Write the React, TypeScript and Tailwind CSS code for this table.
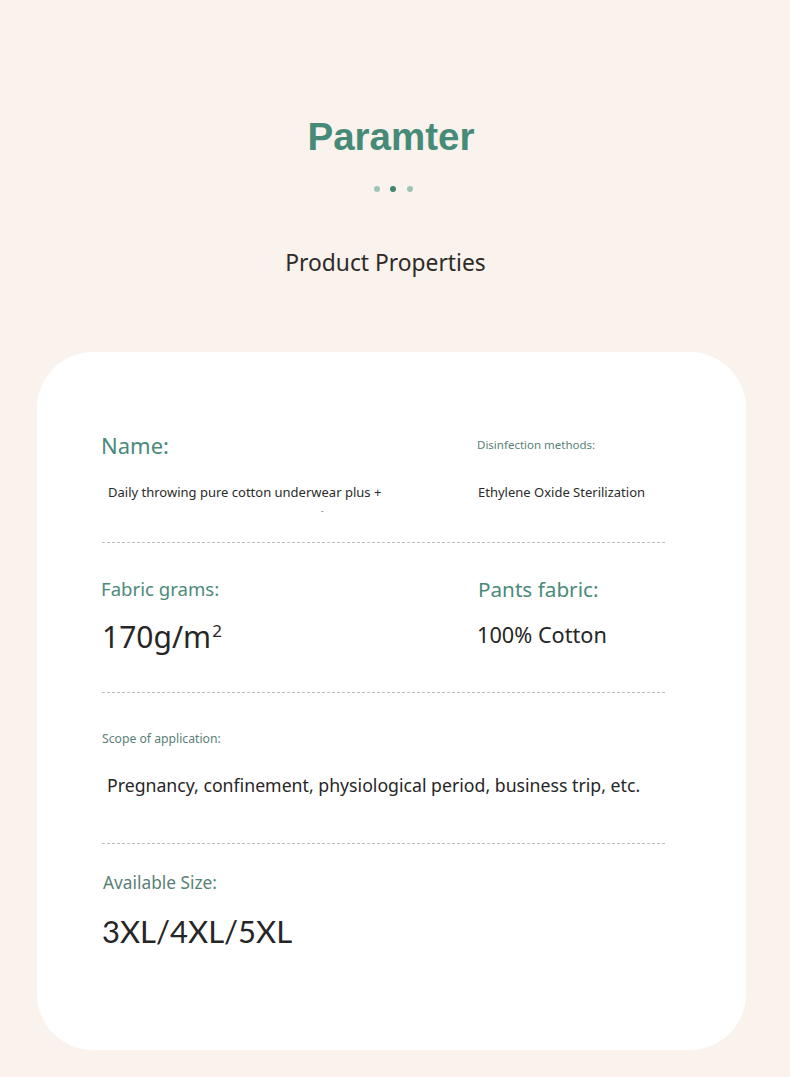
import React from "react";

const noto = { fontFamily: '"Noto Sans", "Open Sans", sans-serif' };

export default function App() {
  return (
    <div className="w-[790px] h-[1077px] bg-[#faf2ec] overflow-hidden" style={noto}>
      <div className="pt-[113px] flex flex-col items-center">
        <h1
          className="text-[38.5px] leading-[48px] font-bold text-[#468b77] -ml-[8px]"
          style={{ fontFamily: '"Liberation Sans", Arial, sans-serif' }}
        >
          Paramter
        </h1>
        <div className="mt-[25px] flex gap-[10.5px] items-center h-[6px] -ml-[4px]">
          <span className="w-[6px] h-[6px] rounded-full bg-[#9cc5b6]" />
          <span className="w-[6px] h-[6px] rounded-full bg-[#3f8670]" />
          <span className="w-[6px] h-[6px] rounded-full bg-[#9cc5b6]" />
        </div>
        <div className="mt-[56px] text-[22.8px] leading-[30px] text-[#2e2a28] -ml-[19px]">Product Properties</div>
      </div>

      <div className="mt-[74px] ml-[37px] mr-[44px] h-[698px] bg-white rounded-[56px] pl-[65px] pr-[81px]">
        {/* Row 1 */}
        <div className="pt-[78px] grid grid-cols-[375px_1fr] border-b border-dashed border-[#bdbdbd] pb-[26px]">
          <div className="flex flex-col">
            <div className="text-[22px] leading-[30px] text-[#4b8a7b] -ml-[1px]">Name:</div>
            <div className="mt-[22px] ml-[6px] text-[13px] leading-[20px] text-[#2b2b2b]">
              Daily throwing pure cotton underwear plus +
            </div>
            <div className="mt-[4px] ml-[219px] h-[10px] text-[8px] leading-[10px] text-[#777]">-</div>
          </div>
          <div className="flex flex-col">
            <div className="h-[30px] flex items-center text-[11.5px] text-[#5a7f78]">Disinfection methods:</div>
            <div className="mt-[22px] text-[13px] leading-[20px] text-[#2b2b2b] ml-[1px]">
              Ethylene Oxide Sterilization
            </div>
          </div>
        </div>

        {/* Row 2 */}
        <div className="pt-[33px] grid grid-cols-[375px_1fr] border-b border-dashed border-[#bdbdbd] pb-[35px]">
          <div className="flex flex-col">
            <div className="text-[18.6px] leading-[26px] text-[#4b8a7b] -ml-[1px]">Fabric grams:</div>
            <div className="mt-[15px] text-[30px] leading-[40px] text-[#262626] flex items-start">
              <span>170g/m</span>
              <span className="text-[17px] leading-[17px] mt-[5px] ml-[1px]">2</span>
            </div>
          </div>
          <div className="flex flex-col">
            <div className="text-[20.7px] leading-[26px] text-[#4b8a7b] ml-[1px]">Pants fabric:</div>
            <div className="mt-[13px] text-[21.7px] leading-[40px] text-[#262626]">100% Cotton</div>
          </div>
        </div>

        {/* Row 3 */}
        <div className="pt-[37px] border-b border-dashed border-[#bdbdbd] pb-[45px]">
          <div className="text-[12.2px] leading-[18px] text-[#5a7f78]">Scope of application:</div>
          <div className="mt-[24px] ml-[5px] text-[17.7px] leading-[26px] text-[#262626]">
            Pregnancy, confinement, physiological period, business trip, etc.
          </div>
        </div>

        {/* Row 4 */}
        <div className="pt-[27px]">
          <div className="text-[17.3px] leading-[24px] text-[#5a7f78] ml-[1px]">Available Size:</div>
          <div
            className="mt-[16px] text-[31px] leading-[40px] text-[#262626]"
            style={{ fontFamily: 'Lato, "Noto Sans", sans-serif' }}
          >
            3XL/4XL/5XL
          </div>
        </div>
      </div>
    </div>
  );
}
